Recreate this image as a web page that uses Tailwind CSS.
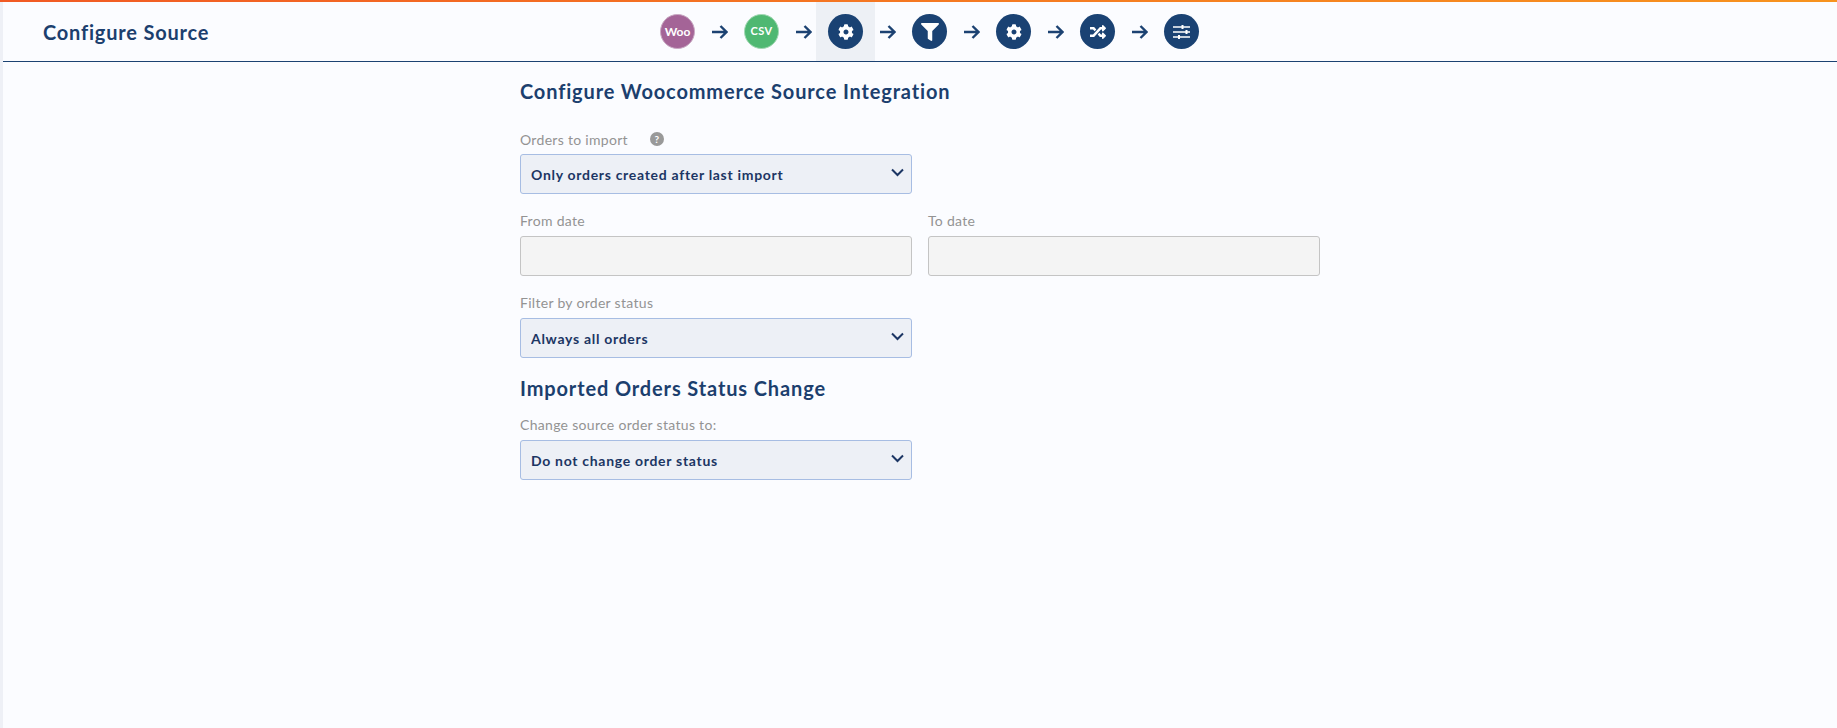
<!DOCTYPE html>
<html>
  <head>
    <meta charset="UTF-8">
    <meta name="viewport" content="width=device-width, initial-scale=1.0">
    <title>Configure Source</title>
    <script src="https://cdn.jsdelivr.net/npm/@tailwindcss/browser@4"></script>
  </head>
  <body class="bg-[#fbfcff] m-0 p-0 h-[728px] overflow-hidden font-['Lato',sans-serif]">
    <div class="h-[2px] bg-gradient-to-r from-[#f15a24] to-[#f7931e]"></div>
    <div class="flex h-[726px]">
      <aside class="w-[3px] bg-[#eef0f6]"></aside>
      <div class="flex-1">
        <header class="h-[60px] flex border-b border-[#1c4272]">
          <div class="w-[645px] pl-[40px] flex items-center">
            <h1 class="text-[20px] font-bold tracking-[0.8px] text-[#1c3f6e]">Configure Source</h1>
          </div>
          <nav class="flex items-center h-[59px]">
            <div class="w-[59px] flex justify-center">
              <span class="w-[35px] h-[35px] rounded-full bg-[#a46497] border border-[#c9a9c3] flex items-center justify-center text-white text-[12px] font-bold">Woo</span>
            </div>
            <svg class="w-[25px] h-[16px] px-[4.5px]" viewBox="0 0 16 16" fill="none" stroke="#1c4272" stroke-width="2.4"><path d="M0 8h15M9 2l6 6-6 6"/></svg>
            <div class="w-[59px] flex justify-center">
              <span class="w-[35px] h-[35px] rounded-full bg-[#4fb872] border border-[#a3d8b4] flex items-center justify-center text-white text-[11px] font-bold tracking-[0.4px]">CSV</span>
            </div>
            <svg class="w-[25px] h-[16px] px-[4.5px]" viewBox="0 0 16 16" fill="none" stroke="#1c4272" stroke-width="2.4"><path d="M0 8h15M9 2l6 6-6 6"/></svg>
            <div class="w-[59px] h-[59px] bg-[#edf0f5] flex items-center justify-center">
              <span class="w-[35px] h-[35px] rounded-full bg-[#1a4273] flex items-center justify-center">
                <svg class="w-[16px] h-[16px]" viewBox="0 0 512 512" fill="#fff"><path d="M487.4 315.7l-42.6-24.6c4.3-23.2 4.3-47 0-70.2l42.6-24.6c4.9-2.8 7.1-8.6 5.5-14-11.1-35.6-30-67.8-54.7-94.6-3.8-4.1-10-5.1-14.8-2.3L380.8 110c-17.9-15.4-38.5-27.3-60.8-35.1V25.8c0-5.6-3.9-10.5-9.4-11.7-36.7-8.2-74.3-7.8-109.2 0-5.5 1.2-9.4 6.1-9.4 11.7V75c-22.2 7.9-42.8 19.8-60.8 35.1L88.7 85.5c-4.9-2.8-11-1.9-14.8 2.3-24.7 26.7-43.6 58.9-54.7 94.6-1.7 5.4.6 11.2 5.5 14L67.3 221c-4.3 23.2-4.3 47 0 70.2l-42.6 24.6c-4.9 2.8-7.1 8.6-5.5 14 11.1 35.6 30 67.8 54.7 94.6 3.8 4.1 10 5.1 14.8 2.3l42.6-24.6c17.9 15.4 38.5 27.3 60.8 35.1v49.2c0 5.6 3.9 10.5 9.4 11.7 36.7 8.2 74.3 7.8 109.2 0 5.5-1.2 9.4-6.1 9.4-11.7v-49.2c22.2-7.9 42.8-19.8 60.8-35.1l42.6 24.6c4.9 2.8 11 1.9 14.8-2.3 24.7-26.7 43.6-58.9 54.7-94.6 1.5-5.5-.7-11.3-5.6-14.1zM256 336c-44.1 0-80-35.9-80-80s35.9-80 80-80 80 35.9 80 80-35.9 80-80 80z"/></svg>
              </span>
            </div>
            <svg class="w-[25px] h-[16px] px-[4.5px]" viewBox="0 0 16 16" fill="none" stroke="#1c4272" stroke-width="2.4"><path d="M0 8h15M9 2l6 6-6 6"/></svg>
            <div class="w-[59px] flex justify-center">
              <span class="w-[35px] h-[35px] rounded-full bg-[#1a4273] flex items-center justify-center">
                <svg class="w-[18px] h-[18px] mt-[1px]" viewBox="0 0 512 512" fill="#fff"><path d="M487.976 0H24.028C2.71 0-8.047 25.866 7.058 40.971L192 225.941V432c0 7.831 3.821 15.17 10.237 19.662l80 55.98C298.02 518.69 320 507.493 320 487.98V225.941l184.947-184.97C520.021 25.896 509.338 0 487.976 0z"/></svg>
              </span>
            </div>
            <svg class="w-[25px] h-[16px] px-[4.5px]" viewBox="0 0 16 16" fill="none" stroke="#1c4272" stroke-width="2.4"><path d="M0 8h15M9 2l6 6-6 6"/></svg>
            <div class="w-[59px] flex justify-center">
              <span class="w-[35px] h-[35px] rounded-full bg-[#1a4273] flex items-center justify-center">
                <svg class="w-[16px] h-[16px]" viewBox="0 0 512 512" fill="#fff"><path d="M487.4 315.7l-42.6-24.6c4.3-23.2 4.3-47 0-70.2l42.6-24.6c4.9-2.8 7.1-8.6 5.5-14-11.1-35.6-30-67.8-54.7-94.6-3.8-4.1-10-5.1-14.8-2.3L380.8 110c-17.9-15.4-38.5-27.3-60.8-35.1V25.8c0-5.6-3.9-10.5-9.4-11.7-36.7-8.2-74.3-7.8-109.2 0-5.5 1.2-9.4 6.1-9.4 11.7V75c-22.2 7.9-42.8 19.8-60.8 35.1L88.7 85.5c-4.9-2.8-11-1.9-14.8 2.3-24.7 26.7-43.6 58.9-54.7 94.6-1.7 5.4.6 11.2 5.5 14L67.3 221c-4.3 23.2-4.3 47 0 70.2l-42.6 24.6c-4.9 2.8-7.1 8.6-5.5 14 11.1 35.6 30 67.8 54.7 94.6 3.8 4.1 10 5.1 14.8 2.3l42.6-24.6c17.9 15.4 38.5 27.3 60.8 35.1v49.2c0 5.6 3.9 10.5 9.4 11.7 36.7 8.2 74.3 7.8 109.2 0 5.5-1.2 9.4-6.1 9.4-11.7v-49.2c22.2-7.9 42.8-19.8 60.8-35.1l42.6 24.6c4.9 2.8 11 1.9 14.8-2.3 24.7-26.7 43.6-58.9 54.7-94.6 1.5-5.5-.7-11.3-5.6-14.1zM256 336c-44.1 0-80-35.9-80-80s35.9-80 80-80 80 35.9 80 80-35.9 80-80 80z"/></svg>
              </span>
            </div>
            <svg class="w-[25px] h-[16px] px-[4.5px]" viewBox="0 0 16 16" fill="none" stroke="#1c4272" stroke-width="2.4"><path d="M0 8h15M9 2l6 6-6 6"/></svg>
            <div class="w-[59px] flex justify-center">
              <span class="w-[35px] h-[35px] rounded-full bg-[#1a4273] flex items-center justify-center">
                <svg class="w-[16px] h-[16px]" viewBox="0 0 512 512" fill="#fff"><path d="M504.971 359.029c9.373 9.373 9.373 24.569 0 33.941l-80 79.984c-15.01 15.01-40.971 4.49-40.971-16.971V416h-58.785a12.004 12.004 0 0 1-8.773-3.812l-70.556-75.596 53.333-57.143L352 336h32v-39.981c0-21.438 25.943-31.998 40.971-16.971l80 79.981zM12 176h84l52.781 56.551 53.333-57.143-70.556-75.596A11.999 11.999 0 0 0 122.785 96H12c-6.627 0-12 5.373-12 12v56c0 6.627 5.373 12 12 12zm372 0v39.984c0 21.46 25.961 31.98 40.971 16.971l80-79.984c9.373-9.373 9.373-24.569 0-33.941l-80-79.981C409.943 24.021 384 34.582 384 56.019V96h-58.785a12.004 12.004 0 0 0-8.773 3.812L96 336H12c-6.627 0-12 5.373-12 12v56c0 6.627 5.373 12 12 12h110.785c3.326 0 6.503-1.381 8.773-3.812L352 176h32z"/></svg>
              </span>
            </div>
            <svg class="w-[25px] h-[16px] px-[4.5px]" viewBox="0 0 16 16" fill="none" stroke="#1c4272" stroke-width="2.4"><path d="M0 8h15M9 2l6 6-6 6"/></svg>
            <div class="w-[59px] flex justify-center">
              <span class="w-[35px] h-[35px] rounded-full bg-[#1a4273] flex items-center justify-center">
                <svg class="w-[17px] h-[14px]" viewBox="0 0 17 14" fill="none" stroke="#fff"><path stroke-width="1.5" d="M0 2h17M0 7h17M0 12h17"/><path stroke-width="2" d="M9.5 0v4M13.5 5v4M6 10v4"/></svg>
              </span>
            </div>
          </nav>
        </header>

        <main class="ml-[517px] w-[800px]">
          <h2 class="pt-[17px] text-[20px] leading-[24px] font-bold tracking-[0.85px] text-[#1c3f6e]">Configure Woocommerce Source Integration</h2>

          <div class="mt-[28px] w-[392px]">
            <label class="flex items-center h-[16px] text-[14px] tracking-[0.3px] text-[#939393]">Orders to import
              <span class="ml-[22px] w-[14px] h-[14px] rounded-full bg-[#999] text-white text-[10px] font-bold flex items-center justify-center">?</span>
            </label>
            <div class="relative mt-[7px]">
              <select class="w-full h-[40px] appearance-none rounded-[3px] border border-[#a7bde3] bg-[#edf0f6] pl-[10px] pt-[1px] text-[14px] font-bold tracking-[0.7px] text-[#1c3664]">
                <option>Only orders created after last import</option>
              </select>
              <svg class="absolute right-[8px] top-[14px] w-[13px] h-[9px] pointer-events-none" viewBox="0 0 13 9" fill="none" stroke="#1c3664" stroke-width="2"><path d="M1 1.5l5.5 5.5 5.5-5.5"/></svg>
            </div>
          </div>

          <div class="mt-[19px] grid grid-cols-2 gap-x-[16px]">
            <div>
              <label class="block h-[16px] leading-[16px] text-[14px] tracking-[0.3px] text-[#939393]">From date</label>
              <input disabled class="block mt-[7px] w-[392px] h-[40px] rounded-[3px] border border-[#c4c4c4] bg-[#f4f4f4]">
            </div>
            <div>
              <label class="block h-[16px] leading-[16px] text-[14px] tracking-[0.3px] text-[#939393]">To date</label>
              <input disabled class="block mt-[7px] w-[392px] h-[40px] rounded-[3px] border border-[#c4c4c4] bg-[#f4f4f4]">
            </div>
          </div>

          <div class="mt-[19px] w-[392px]">
            <label class="block h-[16px] leading-[16px] text-[14px] tracking-[0.3px] text-[#939393]">Filter by order status</label>
            <div class="relative mt-[7px]">
              <select class="w-full h-[40px] appearance-none rounded-[3px] border border-[#a7bde3] bg-[#edf0f6] pl-[10px] pt-[1px] text-[14px] font-bold tracking-[0.7px] text-[#1c3664]">
                <option>Always all orders</option>
              </select>
              <svg class="absolute right-[8px] top-[14px] w-[13px] h-[9px] pointer-events-none" viewBox="0 0 13 9" fill="none" stroke="#1c3664" stroke-width="2"><path d="M1 1.5l5.5 5.5 5.5-5.5"/></svg>
            </div>
          </div>

          <h2 class="mt-[18px] text-[20px] leading-[24px] font-bold tracking-[0.87px] text-[#1c3f6e]">Imported Orders Status Change</h2>

          <div class="mt-[17px] w-[392px]">
            <label class="block h-[16px] leading-[16px] text-[14px] tracking-[0.3px] text-[#939393]">Change source order status to:</label>
            <div class="relative mt-[7px]">
              <select class="w-full h-[40px] appearance-none rounded-[3px] border border-[#a7bde3] bg-[#edf0f6] pl-[10px] pt-[1px] text-[14px] font-bold tracking-[0.7px] text-[#1c3664]">
                <option>Do not change order status</option>
              </select>
              <svg class="absolute right-[8px] top-[14px] w-[13px] h-[9px] pointer-events-none" viewBox="0 0 13 9" fill="none" stroke="#1c3664" stroke-width="2"><path d="M1 1.5l5.5 5.5 5.5-5.5"/></svg>
            </div>
          </div>
        </main>
      </div>
    </div>
  </body>
</html>
